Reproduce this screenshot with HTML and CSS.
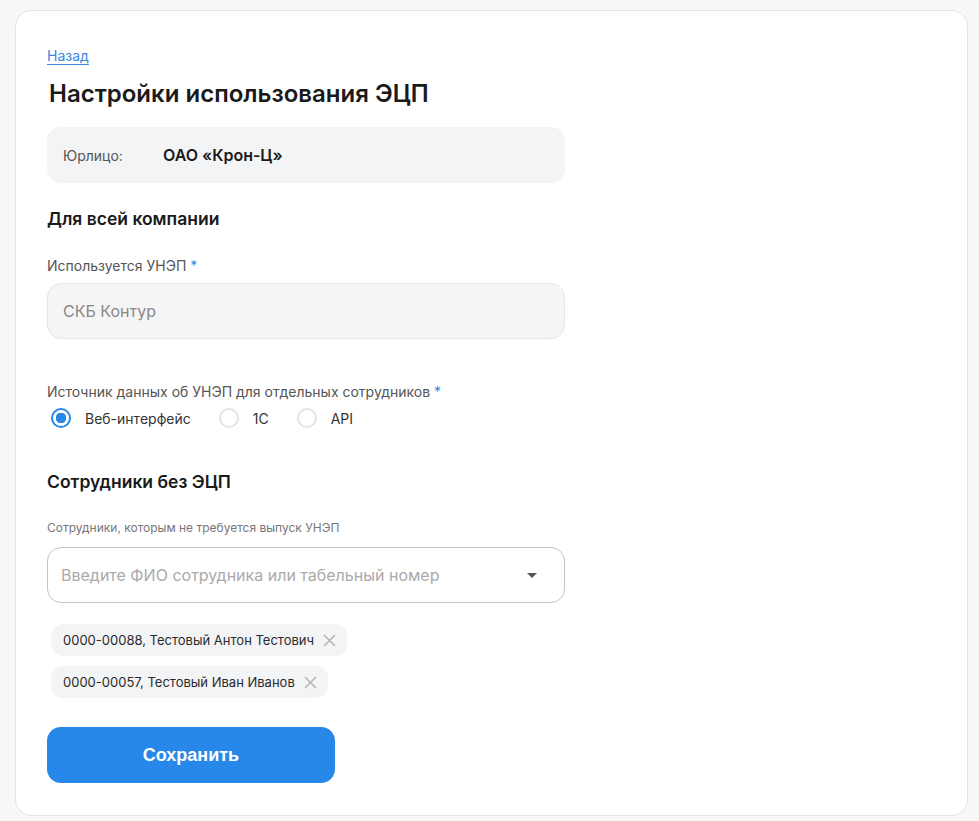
FILE: index.html
```html
<!DOCTYPE html>
<html lang="ru">
<head>
<meta charset="utf-8">
<link rel="stylesheet" href="styles.css">
</head>
<body>
<div class="page">
  <div class="card">
    <a class="back" href="#">Назад</a>
    <h1 class="title">Настройки использования ЭЦП</h1>
    <div class="entity">
      <span class="entity-label">Юрлицо:</span>
      <span class="entity-value">ОАО «Крон-Ц»</span>
    </div>
    <h2 class="section">Для всей компании</h2>
    <div class="label label-first">Используется УНЭП <span class="req">*</span></div>
    <div class="input-disabled">СКБ Контур</div>
    <div class="label label-radio">Источник данных об УНЭП для отдельных сотрудников <span class="req">*</span></div>
    <div class="radios">
      <label class="radio"><span class="dot checked"></span>Веб-интерфейс</label>
      <label class="radio"><span class="dot"></span>1С</label>
      <label class="radio"><span class="dot"></span>API</label>
    </div>
    <h2 class="section section-2">Сотрудники без ЭЦП</h2>
    <div class="hint">Сотрудники, которым не требуется выпуск УНЭП</div>
    <div class="select">
      <span class="placeholder">Введите ФИО сотрудника или табельный номер</span>
      <svg class="caret" width="10" height="5" viewBox="0 0 10 5"><path d="M0 0h10L5 5z" fill="#555"/></svg>
    </div>
    <div class="chips">
      <div class="chip">0000-00088, Тестовый Антон Тестович<svg class="x" width="13" height="13" viewBox="0 0 13 13"><path d="M1 1l11 11M12 1L1 12" stroke="#b5b5b5" stroke-width="1.6"/></svg></div>
      <div class="chip">0000-00057, Тестовый Иван Иванов<svg class="x" width="13" height="13" viewBox="0 0 13 13"><path d="M1 1l11 11M12 1L1 12" stroke="#b5b5b5" stroke-width="1.6"/></svg></div>
    </div>
    <button class="save">Сохранить</button>
  </div>
</div>
</body>
</html>
```
FILE: styles.css
```css
* { box-sizing: border-box; }
html, body { margin: 0; padding: 0; }
body {
  background: #f8f8f8;
  font-family: Inter, "Noto Sans", sans-serif;
  color: #1f1f1f;
}
.page { padding: 10px 11px 6px 15px; }
.card {
  background: #fff;
  border: 1px solid #e3e3e6;
  border-radius: 16px;
  height: 806px;
  padding: 36px 31px 0 31px;
  display: flex;
  flex-direction: column;
  align-items: flex-start;
}
.back {
  font-size: 14px;
  line-height: 17px;
  color: #3a86e0;
  text-decoration: underline;
  text-underline-offset: 3px;
  text-decoration-thickness: 1px;
}
.title {
  margin: 14px 0 0 2px;
  font-size: 24px;
  line-height: 32px;
  font-weight: 600;
  color: #1a1a1a;
  letter-spacing: 0;
}
.entity {
  margin-top: 17px;
  width: 518px;
  height: 56px;
  background: #f3f4f6;
  border-radius: 14px;
  display: flex;
  align-items: center;
  padding-left: 16px;
}
.entity-label { font-size: 14px; color: #555; width: 100px; }
.entity-value { font-size: 16px; font-weight: 600; color: #1a1a1a; }
.section {
  margin: 25px 0 0 0;
  font-size: 17.5px;
  line-height: 22px;
  font-weight: 600;
  color: #1a1a1a;
}
.section-2 { margin-top: 42px; }
.label { font-size: 14px; line-height: 17px; color: #555; }
.label-first { margin-top: 27px; }
.label-radio { margin-top: 44px; }
.req { color: #3a86e0; }
.input-disabled {
  margin-top: 9px;
  width: 518px;
  height: 56px;
  background: #f5f5f5;
  border: 1px solid #e6e6e6;
  border-radius: 14px;
  display: flex;
  align-items: center;
  padding-left: 15px;
  font-size: 16px;
  color: #888;
}
.radios { display: flex; margin-top: 7px; margin-left: 4px; }
.radio {
  display: flex;
  align-items: center;
  font-size: 14px;
  color: #333;
  margin-right: 28px;
  height: 22px;
}
.dot {
  width: 20px; height: 20px;
  border-radius: 50%;
  border: 2px solid #e2e4e8;
  margin-right: 14px;
  display: inline-block;
}
.dot.checked {
  border: 2px solid #2888e9;
  background: radial-gradient(circle, #2888e9 0 5px, #fff 5.5px);
}
.hint { margin-top: 28px; font-size: 12px; line-height: 14px; color: #777; }
.select {
  margin-top: 12px;
  width: 518px;
  height: 56px;
  border: 1px solid #c4c4c4;
  border-radius: 14px;
  display: flex;
  align-items: center;
  justify-content: space-between;
  padding: 0 27px 0 13px;
}
.placeholder { font-size: 16px; color: #aaa; }
.chips {
  margin-top: 21px;
  margin-left: 4px;
  display: flex;
  flex-direction: column;
  align-items: flex-start;
  gap: 10px;
}
.chip {
  height: 32px;
  background: #f3f4f6;
  border-radius: 12px;
  display: flex;
  align-items: center;
  padding: 0 11px 0 12px;
  font-size: 13px;
  color: #2a2a2a;
}
.chip .x { margin-left: 9px; }
.save {
  margin-top: 29px;
  width: 288px;
  height: 56px;
  border: none;
  border-radius: 14px;
  background: #2888e9;
  color: #fff;
  font-family: "Liberation Sans", Arial, sans-serif;
  font-weight: 700;
  font-size: 18px;
}
```
